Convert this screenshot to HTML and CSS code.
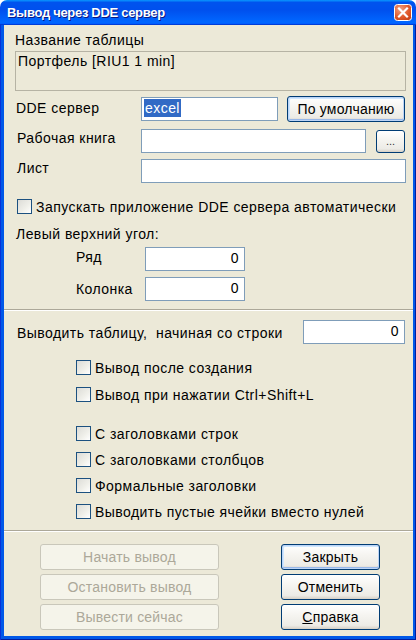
FILE: index.html
```html
<!DOCTYPE html>
<html lang="ru">
<head>
<meta charset="utf-8">
<title>Вывод через DDE сервер</title>
<link rel="stylesheet" href="styles.css">
</head>
<body>
<div class="window">
  <div class="titlebar">
    <span class="title">Вывод через DDE сервер</span>
    <span class="close">
      <svg width="18" height="17" viewBox="0 0 18 17">
        <defs>
          <radialGradient id="rg" cx="0.35" cy="0.3" r="0.9">
            <stop offset="0" stop-color="#F2A283"/>
            <stop offset="0.55" stop-color="#E05A2C"/>
            <stop offset="1" stop-color="#C23C12"/>
          </radialGradient>
        </defs>
        <rect x="0.5" y="0.5" width="17" height="16" rx="3" fill="url(#rg)" stroke="#fff"/>
        <path d="M5 4.5 L13 12.5 M13 4.5 L5 12.5" stroke="#fff" stroke-width="2.2" stroke-linecap="square"/>
      </svg>
    </span>
  </div>
  <div class="frame">
    <div class="body">
      <div class="section sec-top">
        <div class="label l-name">Название таблицы</div>
        <div class="readonly">Портфель [RIU1 1 min]</div>

        <div class="row r-dde">
          <span class="lbl lbl-dde">DDE сервер</span>
          <span class="input w-dde"><span class="sel">excel</span></span>
          <span class="btn btn-focus w-def">По умолчанию</span>
        </div>

        <div class="row r-book">
          <span class="lbl lbl-2">Рабочая книга</span>
          <span class="input w-book"></span>
          <span class="btn w-dots">...</span>
        </div>

        <div class="row r-sheet">
          <span class="lbl lbl-2">Лист</span>
          <span class="input w-sheet"></span>
        </div>

        <div class="check c-auto">
          <span class="box"></span>
          <span class="ctext">Запускать приложение DDE сервера автоматически</span>
        </div>

        <div class="label l-corner">Левый верхний угол:</div>

        <div class="row r-row">
          <span class="lbl lbl-num">Ряд</span>
          <span class="input num">0</span>
        </div>
        <div class="row r-col">
          <span class="lbl lbl-num lbl-col">Колонка</span>
          <span class="input num">0</span>
        </div>
      </div>

      <div class="sep sep-1"></div>

      <div class="section sec-mid">
        <div class="row r-start">
          <span class="lbl lbl-start">Выводить таблицу,&nbsp; начиная со строки</span>
          <span class="input num w-start">0</span>
        </div>

        <div class="check indent c-1">
          <span class="box"></span>
          <span class="ctext">Вывод после создания</span>
        </div>
        <div class="check indent c-2">
          <span class="box"></span>
          <span class="ctext">Вывод при нажатии Ctrl+Shift+L</span>
        </div>

        <div class="check indent c-3">
          <span class="box"></span>
          <span class="ctext">С заголовками строк</span>
        </div>
        <div class="check indent c-4">
          <span class="box"></span>
          <span class="ctext">С заголовками столбцов</span>
        </div>
        <div class="check indent c-4">
          <span class="box"></span>
          <span class="ctext">Формальные заголовки</span>
        </div>
        <div class="check indent c-4">
          <span class="box"></span>
          <span class="ctext">Выводить пустые ячейки вместо нулей</span>
        </div>
      </div>

      <div class="sep sep-2"></div>

      <div class="actions">
        <div class="col-left">
          <span class="btn disabled w-left">Начать вывод</span>
          <span class="btn disabled w-left">Остановить вывод</span>
          <span class="btn disabled w-left">Вывести сейчас</span>
        </div>
        <div class="col-right">
          <span class="btn btn-focus w-right">Закрыть</span>
          <span class="btn w-right">Отменить</span>
          <span class="btn w-right"><u>С</u>правка</span>
        </div>
      </div>
    </div>
  </div>
</div>
</body>
</html>
```

FILE: styles.css
```css
html, body {
  margin: 0;
  padding: 0;
  background: #ffffff;
}

.window {
  width: 416px;
  height: 640px;
  display: flex;
  flex-direction: column;
  font-family: "Liberation Sans", Arial, sans-serif;
  font-size: 14px;
  line-height: 16px;
  letter-spacing: 0.45px;
  color: #000;
}

.titlebar {
  height: 25px;
  flex: none;
  display: flex;
  align-items: flex-start;
  justify-content: space-between;
  border-radius: 7px 7px 0 0;
  background: linear-gradient(180deg, #0997ff 0%, #0053ee 10%, #0050ee 40%, #0066ff 86%, #0066ff 92%, #005bff 95%, #003dd7 97%, #003dd7 100%);
}

.title {
  margin: 5px 0 0 7px;
  color: #fff;
  font-weight: bold;
  font-size: 13px;
  letter-spacing: -0.3px;
  text-shadow: 1px 1px #0a1883;
}

.close {
  display: block;
  margin: 4px 4px 0 0;
  width: 18px;
  height: 17px;
}

.close svg {
  display: block;
}

.frame {
  flex: 1;
  display: flex;
  background: #0058e8;
  padding: 0 4px 4px 4px;
  box-shadow: inset 1px 0 #0831d9, inset -1px 0 #001ea0, inset 0 -1px #001ea0;
}

.body {
  flex: 1;
  background: #ece9d8;
  display: flex;
  flex-direction: column;
}

.section {
  padding: 0 7px 0 11px;
  display: flex;
  flex-direction: column;
}

.sec-top {
  padding-top: 7px;
}

.label {
  height: 16px;
}

.readonly {
  margin-top: 3px;
  height: 36px;
  border: 1px solid #b6b3a4;
  padding: 1px 2px;
}

.row {
  display: flex;
  align-items: center;
}

.lbl {
  width: 126px;
  flex: none;
  align-self: flex-start;
}

.r-dde {
  margin-top: 5px;
  height: 26px;
}

.lbl-dde {
  padding-left: 1px;
  padding-top: 4px;
  width: 125px;
}

.input {
  box-sizing: border-box;
  height: 24px;
  border: 1px solid #7f9db9;
  background: #fff;
  padding: 2px 2px;
  flex: none;
}

.sel {
  display: inline-block;
  background: #316ac5;
  color: #fff;
  padding: 1px 1px 1px 1px;
  margin-top: -1px;
  height: 16px;
}

.w-dde {
  width: 137px;
}

.btn {
  box-sizing: border-box;
  display: flex;
  align-items: center;
  justify-content: center;
  height: 26px;
  border: 1px solid #003c74;
  border-radius: 3px;
  background: linear-gradient(180deg, #ffffff 0%, #f6f5f1 40%, #ecebe6 85%, #d6d0c5 100%);
  color: #000;
  letter-spacing: 0.2px;
  flex: none;
}

.btn-focus {
  box-shadow: inset 0 0 0 1px #bcd4f6, inset 0 -1px 0 1px #98b8ea, inset 1px 1px 0 1px #cee7ff;
}

.w-def {
  margin-left: 9px;
  width: 118px;
}

.r-book {
  margin-top: 7px;
  height: 24px;
}

.lbl-2 {
  padding-left: 2px;
  width: 124px;
  padding-top: 1px;
}

.w-book {
  width: 225px;
}

.w-dots {
  margin-left: 10px;
  width: 29px;
  height: 23px;
  font-size: 11px;
  letter-spacing: 0;
  color: #333;
}

.r-sheet {
  margin-top: 6px;
  height: 24px;
}

.w-sheet {
  width: 265px;
}

.check {
  display: flex;
  align-items: center;
  height: 15px;
}

.box {
  box-sizing: border-box;
  width: 15px;
  height: 15px;
  flex: none;
  border: 1px solid #1c5180;
  background: linear-gradient(135deg, #dcdcd7 0%, #f0f0ea 60%, #ffffff 100%);
}

.ctext {
  margin-left: 4px;
  white-space: nowrap;
}

.c-auto {
  margin-top: 16px;
  padding-left: 2px;
}

.l-corner {
  margin-top: 12px;
  padding-left: 1px;
}

.r-row {
  margin-top: 5px;
  height: 24px;
}

.r-col {
  margin-top: 6px;
  height: 24px;
}

.lbl-num {
  padding-left: 61px;
  width: 69px;
  padding-top: 2px;
}

.lbl-col {
  padding-top: 4px;
}

.num {
  width: 100px;
  text-align: right;
  padding-right: 5px;
}

.sep {
  height: 0;
  border-top: 1px solid #aca899;
  border-bottom: 1px solid #ffffff;
}

.sep-1 {
  margin-top: 8px;
}

.r-start {
  margin-top: 9px;
  height: 24px;
  justify-content: space-between;
}

.lbl-start {
  width: auto;
  padding-left: 2px;
  padding-top: 5px;
  white-space: nowrap;
}

.w-start {
  width: 102px;
  margin-right: 1px;
}

.indent {
  padding-left: 61px;
}

.c-1 {
  margin-top: 16px;
}

.c-2 {
  margin-top: 12px;
}

.c-3 {
  margin-top: 24px;
}

.c-4 {
  margin-top: 11px;
}

.sep-2 {
  margin-top: 11px;
}

.actions {
  display: flex;
  padding: 12px 0 0 36px;
  gap: 62px;
}

.col-left, .col-right {
  display: flex;
  flex-direction: column;
  gap: 4px;
}

.w-left {
  width: 179px;
}

.w-right {
  width: 99px;
}

.disabled {
  border-color: #c9c7ba;
  background: #f5f4ea;
  color: #aca899;
}
```
